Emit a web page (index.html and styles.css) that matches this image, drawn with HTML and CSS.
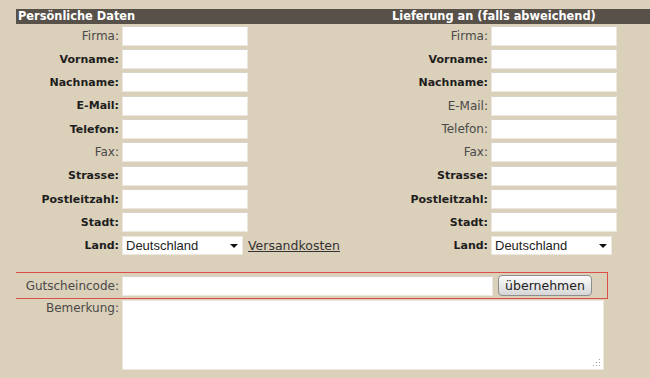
FILE: index.html
```html
<!DOCTYPE html>
<html lang="de">
<head>
    <meta charset="UTF-8">
    <meta name="viewport" content="width=device-width, initial-scale=1.0">
    <title>Bestellung</title>
    <link rel="stylesheet" href="styles.css">
</head>
<body>
    <form class="order">
        <div class="address-grid">
            <div class="head head-left">Persönliche Daten</div>
            <div class="head head-right">Lieferung an (falls abweichend)</div>

            <!-- Firma -->
            <label class="lbl">Firma:</label>
            <input type="text" class="field">
            <span></span>
            <label class="lbl">Firma:</label>
            <input type="text" class="field">
            <span></span>

            <label class="lbl req">Vorname:</label>
            <input type="text" class="field">
            <span></span>
            <label class="lbl req">Vorname:</label>
            <input type="text" class="field">
            <span></span>

            <label class="lbl req">Nachname:</label>
            <input type="text" class="field">
            <span></span>
            <label class="lbl req">Nachname:</label>
            <input type="text" class="field">
            <span></span>

            <label class="lbl req">E-Mail:</label>
            <input type="text" class="field">
            <span></span>
            <label class="lbl">E-Mail:</label>
            <input type="text" class="field">
            <span></span>

            <label class="lbl req">Telefon:</label>
            <input type="text" class="field">
            <span></span>
            <label class="lbl">Telefon:</label>
            <input type="text" class="field">
            <span></span>

            <label class="lbl">Fax:</label>
            <input type="text" class="field">
            <span></span>
            <label class="lbl">Fax:</label>
            <input type="text" class="field">
            <span></span>

            <label class="lbl req">Strasse:</label>
            <input type="text" class="field">
            <span></span>
            <label class="lbl req">Strasse:</label>
            <input type="text" class="field">
            <span></span>

            <label class="lbl req">Postleitzahl:</label>
            <input type="text" class="field">
            <span></span>
            <label class="lbl req">Postleitzahl:</label>
            <input type="text" class="field">
            <span></span>

            <label class="lbl req">Stadt:</label>
            <input type="text" class="field">
            <span></span>
            <label class="lbl req">Stadt:</label>
            <input type="text" class="field">
            <span></span>

            <label class="lbl req">Land:</label>
            <div class="select-wrap">
                <select class="country"><option>Deutschland</option></select>
            </div>
            <a href="#" class="shipping-link">Versandkosten</a>
            <label class="lbl req">Land:</label>
            <div class="select-wrap">
                <select class="country"><option>Deutschland</option></select>
            </div>
            <span></span>
        </div>

        <div class="voucher">
            <label class="lbl">Gutscheincode:</label>
            <input type="text" class="voucher-field">
            <button type="button" class="apply-btn">übernehmen</button>
        </div>

        <div class="note">
            <label class="lbl">Bemerkung:</label>
            <div class="note-wrap">
                <textarea class="note-field"></textarea>
            </div>
        </div>
    </form>
</body>
</html>
```

FILE: styles.css
```css
* {
    box-sizing: border-box;
}

body {
    margin: 9px 0 0 16px;
    background-color: #dbd0b9;
    color: #444444;
    font-family: 'DejaVu Sans', Verdana, sans-serif;
    font-size: 12px;
}

/* Address table */
.address-grid {
    display: grid;
    grid-template-columns: 106px 126px 144px 99px 126px 1fr;
    grid-template-rows: 15px;
    grid-auto-rows: 23.35px;
    align-items: center;
}

.head {
    background-color: #58514a;
    color: #ffffff;
    font-weight: bold;
    font-size: 11.4px;
    height: 15px;
    line-height: 15px;
    align-self: start;
}

.head-left {
    grid-column: 1 / 4;
    padding-left: 2px;
}

.head-right {
    grid-column: 4 / 7;
}

.lbl {
    text-align: right;
    padding-right: 3px;
    color: #4a4a4a;
    white-space: nowrap;
}

.lbl.req {
    font-weight: bold;
    font-size: 11px;
    color: #1e1e1e;
}

.field {
    width: 126px;
    height: 20px;
    border: 1px solid #ece8df;
    border-top-color: #d8d3c8;
    background: #ffffff;
    font: inherit;
}

.select-wrap {
    position: relative;
    width: 121px;
    height: 19px;
}

.country {
    appearance: none;
    width: 100%;
    height: 100%;
    border: 1px solid #ece8df;
    background: #ffffff;
    font-family: 'Liberation Sans', Arial, sans-serif;
    font-size: 13px;
    color: #222222;
    padding: 0 0 0 3px;
    border-radius: 0;
}

.select-wrap::after {
    content: '';
    position: absolute;
    right: 5px;
    top: 8px;
    border-left: 4px solid transparent;
    border-right: 4px solid transparent;
    border-top: 4px solid #111111;
    pointer-events: none;
}

.shipping-link {
    color: #333333;
    text-decoration: underline;
    font-size: 12.5px;
}

/* Voucher */
.voucher {
    display: flex;
    align-items: center;
    width: 598px;
    height: 27px;
    margin: 15px 0 0 -6px;
    border: 1px solid #dc4f48;
}

.voucher .lbl {
    width: 111px;
}

.voucher-field {
    width: 371px;
    height: 20px;
    border: 1px solid #ece8df;
    border-top-color: #d8d3c8;
    background: #ffffff;
}

.apply-btn {
    margin-left: 5px;
    width: 94px;
    height: 21px;
    border: 1px solid #8d8d8d;
    border-radius: 4px;
    background: linear-gradient(#fcfcfc, #d6d6d6);
    font-family: 'DejaVu Sans', Verdana, sans-serif;
    font-size: 12.5px;
    color: #222222;
    padding: 0;
}

/* Remark */
.note {
    display: flex;
    align-items: flex-start;
    margin-top: 1px;
}

.note .lbl {
    width: 106px;
    padding-top: 1px;
}

.note-wrap {
    position: relative;
    width: 482px;
    height: 70px;
}

.note-field {
    display: block;
    width: 100%;
    height: 100%;
    border: 1px solid #ece8df;
    background: #ffffff;
    resize: none;
}

/* dotted resize grip */
.note-wrap::after {
    content: '';
    position: absolute;
    right: 4px;
    bottom: 4px;
    width: 1px;
    height: 1px;
    background: #a0a0a0;
    box-shadow:
        0 -3px #a0a0a0, 0 -6px #a0a0a0,
        -3px 0 #a0a0a0, -3px -3px #a0a0a0,
        -6px 0 #a0a0a0;
    pointer-events: none;
}
```
